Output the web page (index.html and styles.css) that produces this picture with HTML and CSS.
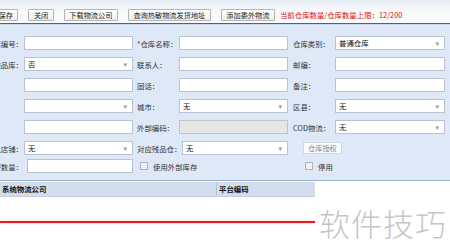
FILE: index.html
```html
<!DOCTYPE html>
<html lang="zh">
<head>
    <meta charset="UTF-8">
    <title>仓库设置</title>
    <link rel="stylesheet" href="styles.css">
</head>
<body>
    <div class="toolbar">
        <button class="first">保存</button>
        <button>关闭</button>
        <button>下载物流公司</button>
        <button>查询热敏物流发货地址</button>
        <button>添加委外物流</button>
        <span class="quota">当前仓库数量/仓库数量上限：12/200</span>
    </div>

    <div class="form">
        <div class="row">
            <label class="l1"><span>仓库编号：</span></label>
            <div class="field f1"></div>
            <label class="l2">*仓库名称：</label>
            <div class="field f2"></div>
            <label class="l3">仓库类别：</label>
            <div class="field f3 select">普通仓库<i class="arrow">▾</i></div>
        </div>
        <div class="row">
            <label class="l1"><span>是否残品库：</span></label>
            <div class="field f1 select">否<i class="arrow">▾</i></div>
            <label class="l2">联系人：</label>
            <div class="field f2"></div>
            <label class="l3">邮编：</label>
            <div class="field f3"></div>
        </div>
        <div class="row">
            <label class="l1"><span></span></label>
            <div class="field f1"></div>
            <label class="l2">固话：</label>
            <div class="field f2"></div>
            <label class="l3">备注：</label>
            <div class="field f3"></div>
        </div>
        <div class="row">
            <label class="l1"><span></span></label>
            <div class="field f1 select"><i class="arrow">▾</i></div>
            <label class="l2">城市：</label>
            <div class="field f2 select">无<i class="arrow">▾</i></div>
            <label class="l3">区县：</label>
            <div class="field f3 select">无<i class="arrow">▾</i></div>
        </div>
        <div class="row">
            <label class="l1"><span></span></label>
            <div class="field f1"></div>
            <label class="l2">外部编码：</label>
            <div class="field f2 disabled"></div>
            <label class="l3">COD物流：</label>
            <div class="field f3 select">无<i class="arrow">▾</i></div>
        </div>
        <div class="row">
            <label class="l1"><span>默认店铺：</span></label>
            <div class="field f1 select">无<i class="arrow">▾</i></div>
            <label class="l2 wide">对应残品仓：</label>
            <div class="field f2 short select">无<i class="arrow">▾</i></div>
            <button class="auth">仓库授权</button>
        </div>
        <div class="row last">
            <label class="l1"><span>预警数量：</span></label>
            <div class="field f1 narrow"></div>
            <label class="check c2"><i class="box"></i>使用外部库存</label>
            <label class="check c3"><i class="box"></i>停用</label>
        </div>
    </div>

    <div class="grid-head">
        <span class="col-name">系统物流公司</span>
        <span class="col-code">平台编码</span>
    </div>

    <div class="grid-body">
        <div class="mark-line"></div>
        <span class="watermark">软件技巧</span>
    </div>
</body>
</html>
```

FILE: styles.css
```css
body {
    margin: 0;
    width: 450px;
    height: 251px;
    overflow: hidden;
    background: #fff;
    font-family: "Noto Sans CJK SC", "DejaVu Sans", sans-serif;
    font-size: 7.4px;
    color: #222;
}
.toolbar {
    height: 24px;
    display: flex;
    align-items: flex-end;
    padding-bottom: 2px;
    box-sizing: border-box;
    background: linear-gradient(#e6ecf4, #f6f8fb 45%, #fafbfd);
    border-bottom: 1px solid #e02828;
}
.toolbar button {
    height: 12px;
    margin-right: 10px;
    padding: 0 4.5px;
    border: 1px solid #b4b4b4;
    border-radius: 1px;
    background: linear-gradient(#ffffff, #eeeeee);
    font-family: inherit;
    font-size: 7.2px;
    line-height: 10px;
    color: #222;
}
.toolbar .first {
    margin-left: -7px;
}
.quota {
    margin-left: -5px;
    line-height: 12px;
    color: #e01010;
}
.form {
    background: #dfe8f6;
    border-top: 1px solid #c5d4e8;
    border-bottom: 1px solid #99b1cf;
    padding: 11px 0 7px;
}
.row {
    display: flex;
    align-items: center;
    height: 14px;
    margin-bottom: 7px;
}
.row.last {
    margin-top: -3px;
    margin-bottom: 0;
}
.l1 {
    width: 23px;
    margin-right: 1px;
    display: flex;
    justify-content: flex-end;
    overflow: hidden;
    white-space: nowrap;
    flex-shrink: 0;
    color: #333;
}
.l1 span {
    flex-shrink: 0;
}
.l2 {
    width: 42px;
    padding-left: 4px;
    white-space: nowrap;
    flex-shrink: 0;
    color: #333;
}
.l2.wide {
    width: 45px;
}
.l3 {
    width: 42px;
    padding-left: 5px;
    white-space: nowrap;
    flex-shrink: 0;
    color: #333;
}
.field {
    position: relative;
    height: 14px;
    box-sizing: border-box;
    border: 1px solid #b7c3d3;
    background: #fff;
    padding-left: 3px;
    line-height: 12px;
    flex-shrink: 0;
    color: #111;
}
.f1 { width: 109px; }
.f2 { width: 109px; }
.f3 { width: 110px; }
.f2.short { width: 106px; }
.f1.narrow {
    width: 106px;
    margin-left: 3px;
}
.disabled {
    background: #e6e6e6;
    border-color: #c4c4c4;
}
.arrow {
    position: absolute;
    right: 5px;
    top: 0;
    font-style: normal;
    font-size: 7px;
    color: #9a9a9a;
}
.auth {
    height: 12px;
    padding: 0 4px;
    margin-left: 15px;
    border: 1px solid #cfd6df;
    background: #fafbfc;
    font-family: inherit;
    font-size: 7.2px;
    line-height: 10px;
    color: #8a8a8a;
}
.check {
    display: flex;
    align-items: center;
    white-space: nowrap;
    flex-shrink: 0;
    color: #333;
}
.c2 { margin-left: 7px; width: 165px; }
.box {
    width: 6px;
    height: 6px;
    margin-right: 5px;
    border: 1px solid #aab4c0;
    background: #eef1f5;
}
.grid-head {
    display: flex;
    width: 315px;
    height: 14px;
    margin-top: 1px;
    background: #d3dded;
    border-bottom: 1px solid #c4d0e0;
    font-weight: bold;
    line-height: 14px;
    color: #111;
}
.col-name {
    width: 214px;
    padding-left: 2px;
    border-right: 1px solid #b9c6d8;
}
.col-code {
    padding-left: 2px;
}
.grid-body {
    display: flex;
    align-items: center;
    height: 50px;
}
.mark-line {
    width: 315px;
    height: 2px;
    background: #e41e1e;
    box-shadow: 0 0 2px #f4a0a0;
}
.watermark {
    margin-left: 4px;
    font-size: 31px;
    font-weight: 300;
    color: #c6c6c6;
    letter-spacing: 1px;
}
```
